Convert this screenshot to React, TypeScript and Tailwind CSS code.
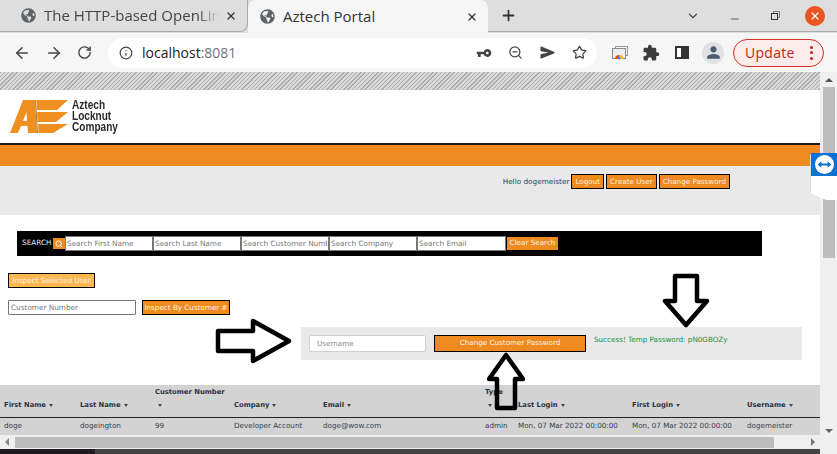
import { Star, ZoomOut, ArrowLeft, ArrowRight, RotateCw, Info, X, Plus, ChevronDown, Minus, Search } from "lucide-react";
import { FaGlobeAmericas } from "react-icons/fa";
import { MdExtension, MdPerson, MdVpnKey } from "react-icons/md";
import { IoSend } from "react-icons/io5";

const HEADERS = [
  { label: "First Name" },
  { label: "Last Name" },
  { label: "Customer Number", stacked: true },
  { label: "Company" },
  { label: "Email" },
  { label: "Type", stacked: true },
  { label: "Last Login" },
  { label: "First Login" },
  { label: "Username" },
];

const ROW = ["doge", "dogeington", "99", "Developer Account", "doge@wow.com", "admin", "Mon, 07 Mar 2022 00:00:00", "Mon, 07 Mar 2022 00:00:00", "dogemeister"];

const SEARCH_FIELDS = ["Search First Name", "Search Last Name", "Search Customer Number", "Search Company", "Search Email"];

const COLS = "grid grid-cols-[76px_75px_79px_89px_162px_33px_114px_115px_1fr] pl-1";

function Caret() {
  return <span className="ml-[3px] inline-block h-0 w-0 border-x-[2.5px] border-t-[3px] border-x-transparent border-t-[#444] align-middle" />;
}

function OrangeButton({ children, className = "" }: { children: React.ReactNode; className?: string }) {
  return <button className={`h-[15px] border border-black bg-[#ef8a20] px-[3px] text-[7.2px] leading-[12px] text-[#fff3e4] ${className}`}>{children}</button>;
}

function Chrome() {
  return (
    <div className="h-[72px] shrink-0 bg-[#f6f6f6] font-['Open_Sans',sans-serif]">
      <div className="flex h-[33px] bg-[#dedede]">
        <div className="flex h-[32px] w-[248px] items-center rounded-br-[8px] border-b border-r border-[#a8a8a8] pl-[21px] pr-[10px] text-[#444]">
          <FaGlobeAmericas className="mr-[8px] size-[15px] shrink-0 text-[#5f6368]" />
          <span className="w-[175px] overflow-hidden whitespace-nowrap text-[15px] [mask-image:linear-gradient(to_right,black_88%,transparent)]">The HTTP-based OpenLink</span>
          <X className="ml-auto size-[12px] text-[#333]" strokeWidth={2.5} />
        </div>
        <div className="flex h-[33px] w-[240px] items-center rounded-t-[8px] bg-[#f6f6f6] pl-[12px] pr-[10px] text-[#333]">
          <FaGlobeAmericas className="mr-[8px] size-[15px] shrink-0 text-[#5f6368]" />
          <span className="text-[15px]">Aztech Portal</span>
          <X className="ml-auto size-[12px] text-[#333]" strokeWidth={2.5} />
        </div>
        <div className="flex h-[32px] flex-1 items-center border-b border-[#a8a8a8] pl-[12px]">
          <Plus className="size-[17px] text-[#333]" strokeWidth={2.5} />
          <ChevronDown className="ml-[169px] size-[14px] text-[#444]" strokeWidth={2} />
          <Minus className="ml-[29px] mt-[6px] size-[12px] text-[#333]" strokeWidth={1.5} />
          <svg viewBox="0 0 9 9" className="ml-[30px] size-[9px]">
            <path d="M2.5 2V.5H8.5V6.5H6.5" fill="none" stroke="#777" />
            <rect x="0.5" y="2.5" width="6" height="6" fill="none" stroke="#333" />
          </svg>
          <span className="ml-[25px] flex size-[20px] items-center justify-center rounded-full bg-[#e95420]">
            <X className="size-[12px] text-white" strokeWidth={2.5} />
          </span>
        </div>
      </div>
      <div className="flex h-[39px] items-center pl-[13px]">
        <ArrowLeft className="size-[18px] text-[#444]" />
        <ArrowRight className="ml-[14px] size-[18px] text-[#444]" />
        <RotateCw className="ml-[14px] size-[15px] text-[#444]" strokeWidth={2.2} />
        <div className="ml-[16px] flex h-[30px] w-[489px] items-center rounded-full bg-white pl-[11px] pr-[10px]">
          <Info className="size-[14px] text-[#444]" />
          <span className="ml-[9px] text-[14px] text-[#222]">localhost<span className="text-[#70757a]">:8081</span></span>
          <MdVpnKey className="ml-auto size-[16px] -scale-x-100 text-[#444]" />
          <ZoomOut className="ml-[16px] size-[15px] text-[#444]" />
          <IoSend className="ml-[17px] size-[15px] text-[#444]" />
          <Star className="ml-[17px] size-[15px] text-[#444]" strokeWidth={2} />
        </div>
        <svg viewBox="0 0 16 14" className="ml-[15px] size-[16px]">
          <rect x="3.5" y="0.5" width="12" height="9" fill="none" stroke="#9a9a9a" />
          <rect x="0.5" y="2.5" width="13" height="10" fill="#eee" stroke="#8a8a8a" />
          <path d="M3 13a4 4 0 0 1 8 0z" fill="#ea4335" />
          <path d="M7 13V9a4 4 0 0 1 4 4z" fill="#fbbc05" />
          <circle cx="7" cy="12" r="1.6" fill="#4285f4" />
        </svg>
        <MdExtension className="ml-[14px] size-[18px] text-[#3c3c3c]" />
        <span className="ml-[15px] flex h-[13px] w-[14px] justify-end border-2 border-[#333] bg-white">
          <span className="h-full w-[6px] bg-[#333]" />
        </span>
        <span className="ml-[13px] flex size-[22px] items-center justify-center rounded-full bg-[#dfe1e5]">
          <MdPerson className="size-[19px] text-[#4c5a70]" />
        </span>
        <div className="ml-[9px] flex h-[28px] w-[91px] items-center rounded-full border border-[#d93025] bg-[#fbeceb] pl-[11px] text-[#c5221f]">
          <span className="text-[14px] tracking-[0.3px]">Update</span>
          <span className="ml-[15px] flex flex-col gap-[2.5px]">
            <i className="size-[3px] rounded-full bg-[#c5221f]" />
            <i className="size-[3px] rounded-full bg-[#c5221f]" />
            <i className="size-[3px] rounded-full bg-[#c5221f]" />
          </span>
        </div>
      </div>
    </div>
  );
}

function Logo() {
  return (
    <div className="flex h-[53px] items-center pb-[1px] pl-[10px]">
      <svg viewBox="0 0 58 35" className="h-[35px] w-[58px] shrink-0">
        <path d="M0 34 L13 1 H25 L27 34 H18 L17.5 27 H11 L8 34 Z M13 22 H17 L16.5 13 Z" fill="#ef8f1f" fillRule="evenodd" />
        <path d="M26.5 1 H58 L47 11 H27 Z" fill="#ef8f1f" />
        <path d="M27 13 H58 L46 23 H27.5 Z" fill="#ef8f1f" />
        <path d="M28 25 H58 L43 34 H28.5 Z" fill="#ef8f1f" />
        <path d="M25.5 1 L27.5 34" stroke="#8a5a18" strokeWidth="0.8" />
      </svg>
      <div className="ml-[4px] mt-[1px] origin-left font-['Liberation_Sans',sans-serif] text-[12px] font-bold leading-[11px] text-[#2a2a2a] [transform:scaleX(0.84)]">
        <div>Aztech</div>
        <div>Locknut</div>
        <div>Company</div>
      </div>
    </div>
  );
}

function Arrow({ className, viewBox, d }: { className: string; viewBox: string; d: string }) {
  return (
    <svg className={`absolute ${className}`} viewBox={viewBox}>
      <path d={d} fill="none" stroke="#000" strokeWidth="4.5" strokeLinejoin="round" />
    </svg>
  );
}

export default function App() {
  return (
    <div className="flex h-[454px] w-[837px] flex-col overflow-hidden bg-white font-['DejaVu_Sans',sans-serif]">
      <Chrome />
      <div className="relative flex min-h-0 flex-1">
        <div className="w-[820px] overflow-hidden">
          <div className="h-[18px] bg-[repeating-linear-gradient(135deg,#adadad_0,#adadad_1px,#d8d8d8_1px,#d8d8d8_3px)]" />
          <Logo />
          <div className="h-[2px] bg-[#1b1b1b]" />
          <div className="h-[21px] bg-[#ef8a20]" />
          <div className="flex h-[49px] items-start justify-end gap-[2px] bg-[#e9e9e9] pr-[90px] pt-[8px]">
            <span className="text-[7.3px] leading-[15px] text-[#2b3f5c]">Hello dogemeister</span>
            <OrangeButton>Logout</OrangeButton>
            <OrangeButton>Create User</OrangeButton>
            <OrangeButton>Change Password</OrangeButton>
          </div>

          <div className="ml-[17px] mt-[16px] flex h-[25px] w-[745px] items-center bg-black pl-[5px] text-[7.3px] text-[#dbe8ff]">
            <span className="w-[31px]">SEARCH</span>
            <span className="flex h-[11px] w-[12px] items-center justify-center bg-[#ef8a20]">
              <Search className="size-[8px] text-white" strokeWidth={3} />
            </span>
            {SEARCH_FIELDS.map((f) => (
              <input
                key={f}
                placeholder={f}
                className="h-[15px] w-[88px] border border-[#777] bg-white px-[1px] text-[7.3px] placeholder:text-[#777] last-of-type:w-[89px]"
              />
            ))}
            <button className="ml-[1px] h-[13px] w-[51px] bg-[#ef8a20] text-[7.2px] text-[#fff3e4]">Clear Search</button>
          </div>

          <div className="ml-[8px] mt-[17px] flex">
            <button className="h-[15px] w-[87px] border border-black bg-[#fdb753] text-[7.2px] leading-[12px] text-[#fff3e0]">Inspect Selected User</button>
          </div>

          <div className="ml-[8px] mt-[12px] flex gap-[6px]">
            <input placeholder="Customer Number" className="h-[15px] w-[128px] rounded-[1px] border border-[#777] bg-white px-[2px] text-[7.3px] placeholder:text-[#777]" />
            <OrangeButton className="w-[88px] !px-0">Inspect By Customer #</OrangeButton>
          </div>

          <div className="ml-[301px] mt-[12px] flex h-[33px] w-[501px] items-start bg-[#e9e9e9] pl-[8px] pt-[8px]">
            <input placeholder="Username" className="h-[17px] w-[117px] rounded-[2px] border border-[#d0d0d0] bg-white px-[7px] text-[7.2px] placeholder:text-[#888]" />
            <button className="ml-[8px] h-[17px] w-[152px] border border-black bg-[#ef8a20] text-[7.2px] text-[#fff3e4]">Change Customer Password</button>
            <span className="ml-[8px] text-[7.2px] leading-[10px] text-[#178f3c]">Success! Temp Password: pN0GBOZy</span>
          </div>

          <div className="mt-[25px] bg-[#d3d3d3] text-[7.2px] text-[#34404f]">
            <div className={`${COLS} h-[33px] items-end border-b border-[#222] text-[6.8px] font-bold text-[#2a3240]`}>
              {HEADERS.map((h) => (
                <div key={h.label} className="pb-[6px] leading-[12px]">
                  {h.stacked ? (
                    <div>
                      <div className="whitespace-nowrap">{h.label}</div>
                      <div className="mt-[1px]"><Caret /></div>
                    </div>
                  ) : (
                    <span className="whitespace-nowrap">{h.label}<Caret /></span>
                  )}
                </div>
              ))}
            </div>
            <div className={`${COLS} h-[17px] items-center`}>
              {ROW.map((c, i) => (
                <div key={i} className="whitespace-nowrap">{c}</div>
              ))}
            </div>
          </div>

          <div className="flex h-[14px] items-center bg-[#efefef] pl-[5px] pr-[5px]">
            <span className="h-0 w-0 border-y-[4px] border-r-[4px] border-y-transparent border-r-[#888]" />
            <span className="ml-[6px] h-[11px] w-[759px] bg-[#bdbdbd]" />
            <span className="ml-auto h-0 w-0 border-y-[4px] border-l-[4px] border-y-transparent border-l-[#777]" />
          </div>
          <div className="flex h-[5px]">
            <div className="w-[95px] bg-[#1f1a1f]" />
            <div className="flex-1 bg-[#444]" />
          </div>
        </div>

        <div className="flex w-[17px] flex-col items-center bg-[#efefef] pb-[6px] pt-[6px]">
          <span className="h-0 w-0 border-x-[4px] border-b-[4px] border-x-transparent border-b-[#555]" />
          <span className="mt-[5px] h-[171px] w-[12px] bg-[#bdbdbd]" />
          <span className="mb-[15px] mt-auto h-0 w-0 border-x-[4px] border-t-[4px] border-x-transparent border-t-[#666]" />
        </div>

        {/* annotations and the teamviewer tab sit over the page */}
        <Arrow className="left-[215px] top-[246px] h-[46px] w-[78px]" viewBox="0 0 78 46" d="M3 13 H38 V3 L74 23 L38 43 V33 H3 Z" />
        <Arrow className="left-[662px] top-[200px] h-[56px] w-[48px]" viewBox="0 0 48 56" d="M13 4 H35 V29 H45 L24 53 L3 29 H13 Z" />
        <Arrow className="left-[487px] top-[280px] h-[60px] w-[38px]" viewBox="0 0 38 60" d="M10 56 H28 V27 H36 L19 3 L2 27 H10 Z" />
        <div className="absolute left-[810px] top-[81px] h-[47px] w-[27px] rounded-l-[3px] border-l border-[#ddd] bg-white [clip-path:polygon(0_0,100%_0,100%_100%,60%_100%,0_85%)]">
          <div className="flex h-[23px] w-[26px] items-center justify-center bg-[#0e71d6]">
            <svg viewBox="0 0 18 18" className="size-[19px]">
              <circle cx="9" cy="9" r="9" fill="#fff" />
              <path d="M2.5 9 L6 6 V8 H12 V6 L15.5 9 L12 12 V10 H6 V12 Z" fill="#0e71d6" />
            </svg>
          </div>
        </div>
      </div>
    </div>
  );
}
